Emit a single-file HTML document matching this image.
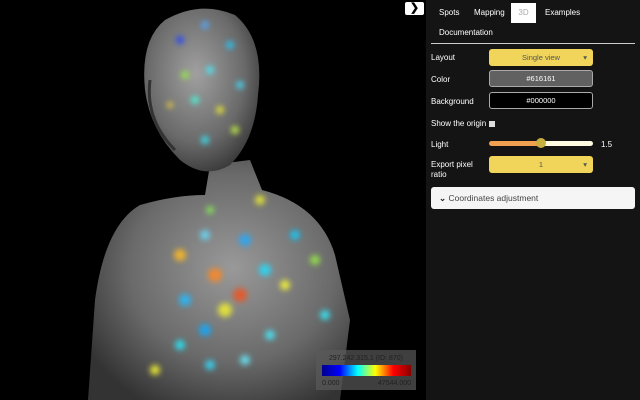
<!DOCTYPE html>
<html><head><style>
body{margin:0;width:640px;height:400px;background:#000;overflow:hidden;font-family:"Liberation Sans",sans-serif;position:relative}
#panel{position:absolute;left:426px;top:0;width:214px;height:400px;background:#141414;color:#fff;font-size:8px}
.tab{position:absolute;top:3px;height:20px;line-height:20px;font-size:8px;color:#fff}
.row{position:absolute;left:5px;font-size:8px}
.box{position:absolute;left:63px;width:104px;height:17px;border-radius:3px;text-align:center;line-height:17px;font-size:7.5px}
.btn{position:absolute;left:405px;top:2px;width:19px;height:13px;background:#fff;border-radius:2px;color:#000;font-weight:bold;text-align:center;line-height:13px;font-size:11px}
</style></head><body>
<svg width="426" height="400" style="position:absolute;left:0;top:0">
<defs>
<radialGradient id="hg" cx="45%" cy="40%" r="70%"><stop offset="0" stop-color="#a0a0a0"/><stop offset="0.6" stop-color="#6a6a6a"/><stop offset="1" stop-color="#2a2a2a"/></radialGradient>
<radialGradient id="tg" cx="55%" cy="45%" r="65%"><stop offset="0" stop-color="#999"/><stop offset="0.6" stop-color="#6a6a6a"/><stop offset="1" stop-color="#333"/></radialGradient>
<filter id="b"><feGaussianBlur stdDeviation="3"/></filter>
</defs>
<path d="M88 400 L95 300 Q105 225 140 205 Q175 195 205 195 L210 165 L250 160 L262 190 Q320 205 335 255 L350 320 L340 400 Z" fill="url(#tg)"/>
<path d="M165 20 Q200 0 235 15 Q265 40 258 95 Q255 140 230 165 Q205 180 180 160 Q150 130 145 90 Q140 40 165 20Z" fill="url(#hg)"/>
<path d="M150 80 Q145 120 175 150" stroke="#333" stroke-width="3" fill="none"/>
<g filter="url(#b)" opacity="0.85">
<circle cx="180" cy="40" r="4" fill="#24f"/><circle cx="205" cy="25" r="4" fill="#5af"/><circle cx="230" cy="45" r="4" fill="#2cf"/>
<circle cx="185" cy="75" r="4" fill="#9e4"/><circle cx="210" cy="70" r="4" fill="#4ef"/><circle cx="170" cy="105" r="3" fill="#fd3"/>
<circle cx="195" cy="100" r="4" fill="#4fd"/><circle cx="220" cy="110" r="4" fill="#ee3"/><circle cx="240" cy="85" r="4" fill="#4df"/>
<circle cx="205" cy="140" r="4" fill="#3ef"/><circle cx="235" cy="130" r="4" fill="#cf4"/><circle cx="260" cy="200" r="5" fill="#ee3"/>
<circle cx="210" cy="210" r="4" fill="#8e5"/><circle cx="245" cy="240" r="6" fill="#2af"/><circle cx="295" cy="235" r="5" fill="#1cf"/>
<circle cx="180" cy="255" r="6" fill="#fb2"/><circle cx="205" cy="235" r="5" fill="#6df"/><circle cx="215" cy="275" r="7" fill="#f82"/>
<circle cx="240" cy="295" r="7" fill="#e52"/><circle cx="265" cy="270" r="6" fill="#2df"/><circle cx="225" cy="310" r="7" fill="#ee3"/>
<circle cx="185" cy="300" r="6" fill="#2bf"/><circle cx="205" cy="330" r="6" fill="#1af"/><circle cx="285" cy="285" r="5" fill="#ff3"/>
<circle cx="325" cy="315" r="5" fill="#3ef"/><circle cx="270" cy="335" r="5" fill="#4ef"/><circle cx="180" cy="345" r="5" fill="#2ef"/>
<circle cx="210" cy="365" r="5" fill="#3df"/><circle cx="155" cy="370" r="5" fill="#ff3"/><circle cx="245" cy="360" r="5" fill="#6ef"/>
<circle cx="315" cy="260" r="5" fill="#9e4"/>
</g>
<rect x="316" y="350" width="100" height="40" fill="rgba(90,90,90,0.7)"/>
<text x="366" y="360" fill="#222" font-size="7" text-anchor="middle" font-family="Liberation Sans">297.242.315.1 (ID: 870)</text>
<defs><linearGradient id="cb"><stop offset="0" stop-color="#00008f"/><stop offset="0.2" stop-color="#00f"/><stop offset="0.4" stop-color="#0ff"/><stop offset="0.6" stop-color="#ff0"/><stop offset="0.8" stop-color="#f00"/><stop offset="1" stop-color="#800"/></linearGradient></defs>
<rect x="322" y="365" width="89" height="11" fill="url(#cb)"/>
<text x="322" y="385" fill="#222" font-size="7" font-family="Liberation Sans">0.000</text>
<text x="411" y="385" fill="#222" font-size="7" text-anchor="end" font-family="Liberation Sans">47544.000</text>
</svg>
<div class="btn">&#10095;</div>
<div id="panel">
<div class="tab" style="left:13px">Spots</div>
<div class="tab" style="left:48px">Mapping</div>
<div class="tab" style="left:85px;width:25px;background:#fff;color:#aaa;text-align:center">3D</div>
<div class="tab" style="left:119px">Examples</div>
<div class="tab" style="left:13px;top:23px">Documentation</div>
<div style="position:absolute;left:5px;top:43px;width:204px;height:1px;background:#ccc"></div>
<div class="row" style="top:53px">Layout</div>
<div class="box" style="top:49px;background:#f0d55a;color:#555">Single view<span style="position:absolute;right:6px">&#9662;</span></div>
<div class="row" style="top:75px">Color</div>
<div class="box" style="top:70px;background:#616161;border:1px solid #aaa;width:102px;height:15px;line-height:15px">#616161</div>
<div class="row" style="top:97px">Background</div>
<div class="box" style="top:92px;background:#000;border:1px solid #aaa;width:102px;height:15px;line-height:15px">#000000</div>
<div class="row" style="top:119px">Show the origin</div>
<div style="position:absolute;left:63px;top:121px;width:6px;height:6px;background:#ddd"></div>
<div class="row" style="top:140px">Light</div>
<div style="position:absolute;left:63px;top:141px;width:52px;height:5px;background:#f0a050;border-radius:3px 0 0 3px"></div>
<div style="position:absolute;left:115px;top:141px;width:52px;height:5px;background:#fffbe0;border-radius:0 3px 3px 0"></div>
<div style="position:absolute;left:110px;top:138px;width:10px;height:10px;background:#c8b040;border-radius:50%"></div>
<div style="position:absolute;left:175px;top:140px">1.5</div>
<div class="row" style="top:160px;line-height:10px">Export pixel<br>ratio</div>
<div class="box" style="top:156px;background:#f0d55a;color:#555">1<span style="position:absolute;right:6px">&#9662;</span></div>
<div style="position:absolute;left:5px;top:187px;width:204px;height:22px;background:#f5f5f5;border-radius:3px;color:#444;font-size:8.5px;line-height:22px"><b style="margin-left:8px;color:#222">&#8964;</b> Coordinates adjustment</div>
</div>
</body></html>
